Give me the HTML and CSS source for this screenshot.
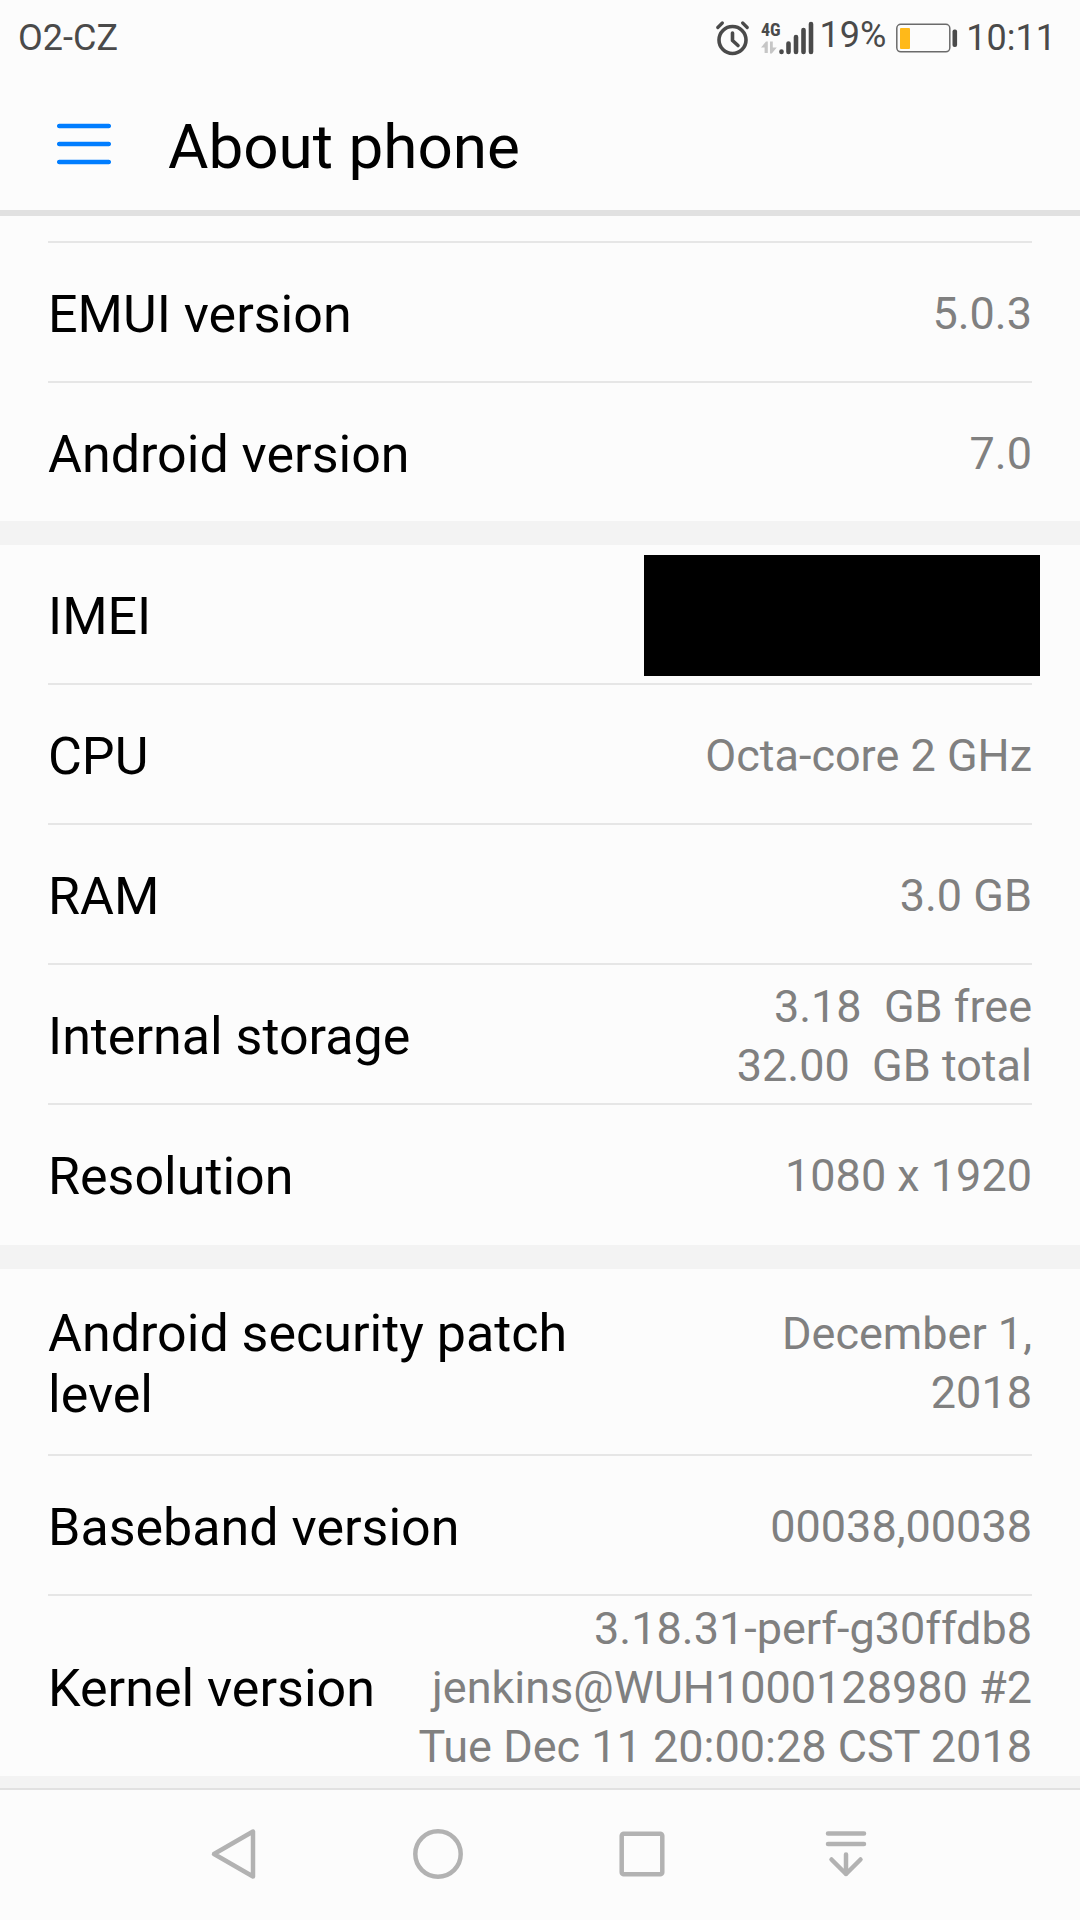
FILE: index.html
```html
<!DOCTYPE html>
<html lang="en">
<head>
<meta charset="utf-8">
<title>About phone</title>
<meta name="viewport" content="width=device-width, initial-scale=1.0">
<link rel="stylesheet" href="styles.css">
</head>
<body>

<div class="status-bar">
    <span>O2-CZ</span>
    <div class="status-icons">
        <svg class="alarm" width="34" height="36" viewBox="0 0 34 36" fill="none" stroke="#4a4a4a" stroke-linecap="round">
            <circle cx="16.500" cy="20" r="13.500" stroke-width="3.600"/>
            <path d="M16.500 13v7.500l5.500 5" stroke-width="3.600" stroke-linejoin="round"/>
            <path d="M1.800 7.500l4.500-4.500M31.200 7.500l-4.500-4.500" stroke-width="3.200"/>
        </svg>
        <svg class="signal" width="53" height="52" viewBox="0 -8 53 52">
            <text class="signal-type" x="0" y="16">4G</text>
            <path d="M0 27.500l5-6h1.800v11.500H3.600v-5.500zM9 21.500h2.800v6h4l-5 6H9z" fill="#c6c6c6"/>
            <path d="M20.500 31.500v.5M27.500 23.500v8.500M35 17v15M42.500 10v22M50 4v28" stroke="#4a4a4a" stroke-width="4.600" stroke-linecap="round"/>
        </svg>
        <span class="percent">19%</span>
        <svg class="battery" width="62" height="36" viewBox="0 0 62 36">
            <rect x=".8" y="4.300" width="53" height="27.500" rx="4" fill="none" stroke="#6b6b6b" stroke-width="1.500"/>
            <rect x="4" y="8" width="10" height="21" rx="1" fill="#ffb919"/>
            <rect x="56.500" y="9.500" width="4.600" height="17.500" rx="2" fill="#4a4a4a"/>
        </svg>
        <span>10:11</span>
    </div>
</div>

<header class="header">
    <button class="menu-btn" aria-label="Menu">
        <svg width="54" height="42" viewBox="0 0 54 42" stroke="#007dff" stroke-width="4.500" stroke-linecap="round">
            <path d="M2.200 3h49.600M2.200 21h49.600M2.200 39h49.600"/>
        </svg>
    </button>
    <h1>About phone</h1>
</header>

<main>
    <dl class="group group-version">
        <div class="row"><dt>EMUI version</dt><dd>5.0.3</dd></div>
        <div class="row"><dt>Android version</dt><dd>7.0</dd></div>
    </dl>

    <dl class="group group-hardware">
        <div class="row"><dt>IMEI</dt><dd class="hidden-value"></dd></div>
        <div class="row"><dt>CPU</dt><dd>Octa-core 2 GHz</dd></div>
        <div class="row"><dt>RAM</dt><dd>3.0 GB</dd></div>
        <div class="row"><dt>Internal storage</dt><dd>3.18&nbsp; GB free<br>32.00&nbsp; GB total</dd></div>
        <div class="row"><dt>Resolution</dt><dd>1080 x 1920</dd></div>
    </dl>

    <dl class="group">
        <div class="row"><dt>Android security patch level</dt><dd>December 1, 2018</dd></div>
        <div class="row"><dt>Baseband version</dt><dd>00038,00038</dd></div>
        <div class="row"><dt>Kernel version</dt><dd>3.18.31-perf-g30ffdb8<br>jenkins@WUH1000128980 #2<br>Tue Dec 11 20:00:28 CST 2018</dd></div>
    </dl>
</main>

<nav class="nav-bar">
    <button aria-label="Back">
        <svg width="52" height="52" viewBox="0 0 52 52"><path d="M45 3.500v45L6 26z"/></svg>
    </button>
    <button aria-label="Home">
        <svg width="52" height="52" viewBox="0 0 52 52"><circle cx="26" cy="26" r="22.700"/></svg>
    </button>
    <button aria-label="Recent apps">
        <svg width="52" height="52" viewBox="0 0 52 52"><rect x="5.700" y="5.700" width="40.600" height="40.600" rx="2"/></svg>
    </button>
    <button aria-label="Notifications">
        <svg width="52" height="52" viewBox="0 0 52 52"><path d="M8 5.600h36M8 16h36M26 26.500V46M11.500 31.500L26 46l14.500-14.500"/></svg>
    </button>
</nav>

</body>
</html>
```
FILE: styles.css
```css
body {
    margin: 0;
    min-height: 100vh;
    display: flex;
    flex-direction: column;
    background: #fcfcfc;
    color: #000;
    font-family: Roboto, "Noto Sans", sans-serif;
}

button {
    border: none;
    background: none;
    padding: 0;
    cursor: pointer;
}

svg {
    display: block;
}

/* status bar */
.status-bar {
    display: flex;
    justify-content: space-between;
    align-items: center;
    height: 75px;
    padding: 0 24px 0 18px;
    font-size: 36px;
    color: #4a4a4a;
}

.status-icons {
    display: flex;
    align-items: center;
}

.alarm {
    margin-right: 11px;
}

.signal {
    margin-right: 6px;
}

.signal-type {
    font-family: "Roboto Condensed", "Liberation Sans Narrow", Roboto, sans-serif;
    font-size: 18px;
    font-weight: bold;
    fill: #4a4a4a;
}

.percent {
    padding-bottom: 6px;
}

.battery {
    margin: 0 8px 0 10px;
}

/* title */
.header {
    display: flex;
    align-items: center;
    gap: 57px;
    height: 132px;
    padding: 3px 57px 0;
    border-bottom: 6px solid #e1e1e1;
}

.header h1 {
    margin: 0;
    padding-top: 4px;
    font-size: 62px;
    font-weight: normal;
}

/* list */
main {
    flex: 1;
    background: #f3f3f3;
}

.group {
    margin: 0 0 24px;
    padding: 0 48px;
    background: #fcfcfc;
}

.group:last-child {
    margin-bottom: 0;
}

.group-version {
    padding-top: 25px;
}

.group-version .row:first-child {
    border-top: 2px solid #e6e6e6;
}

.group-hardware {
    padding-bottom: 2px;
}

.row {
    display: flex;
    justify-content: space-between;
    align-items: center;
    gap: 24px;
    min-height: 138px;
    border-bottom: 2px solid #e6e6e6;
}

.row:last-child {
    border-bottom: none;
}

dt {
    padding: 34px 0 29px;
    font-size: 52px;
    line-height: 61px;
}

dd {
    margin: 0;
    padding-top: 3px;
    font-size: 45px;
    line-height: 59px;
    color: #808080;
    text-align: right;
}

.hidden-value {
    width: 396px;
    height: 118px;
    margin: 3px -8px 0 0;
    background: #000;
}

/* navigation */
.nav-bar {
    display: flex;
    height: 128px;
    padding: 0 132px 2px;
    border-top: 2px solid #e1e1e1;
}

.nav-bar button {
    flex: 1;
    display: flex;
    justify-content: center;
    align-items: center;
}

.nav-bar svg {
    fill: none;
    stroke: #b2b2b2;
    stroke-width: 4.5px;
    stroke-linecap: round;
    stroke-linejoin: round;
}
```
